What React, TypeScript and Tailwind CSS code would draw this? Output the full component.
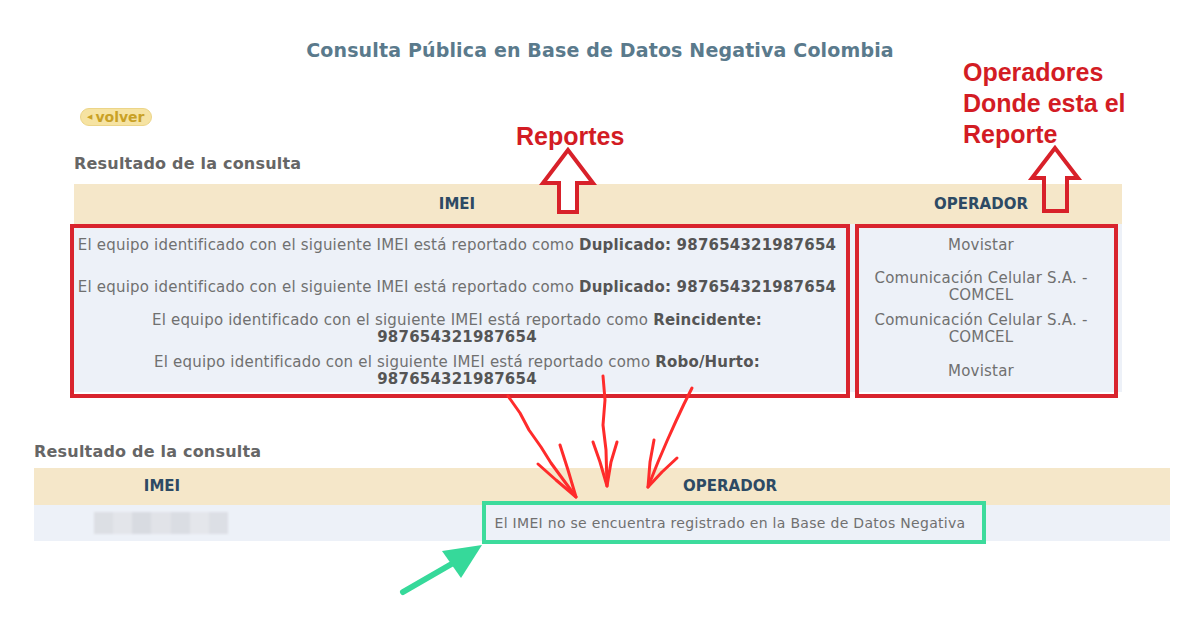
import React from 'react';

const reports = [
  { lines: [['El equipo identificado con el siguiente IMEI está reportado como ', 'Duplicado: 987654321987654']], operator: ['Movistar'] },
  { lines: [['El equipo identificado con el siguiente IMEI está reportado como ', 'Duplicado: 987654321987654']], operator: ['Comunicación Celular S.A. -', 'COMCEL'] },
  { lines: [['El equipo identificado con el siguiente IMEI está reportado como ', 'Reincidente:'], ['', '987654321987654']], operator: ['Comunicación Celular S.A. -', 'COMCEL'] },
  { lines: [['El equipo identificado con el siguiente IMEI está reportado como ', 'Robo/Hurto:'], ['', '987654321987654']], operator: ['Movistar'] },
];

const HeaderCell: React.FC<{ children: React.ReactNode }> = ({ children }) => (
  <div className="flex items-center justify-center text-[15px] font-bold text-[#2d4a64]">{children}</div>
);

// hand-drawn style overlays: callout arrows and highlight boxes
const Annotations: React.FC = () => (
  <svg className="absolute inset-0 pointer-events-none" width="1200" height="628" viewBox="0 0 1200 628">
    {/* outline up arrows */}
    <path d="M568 150 L543 183 L559 183 L559 212 L577 212 L577 183 L593 183 Z" fill="white" stroke="#d8212a" strokeWidth="4" strokeLinejoin="miter" />
    <path d="M1055 148 L1032 178 L1044 178 L1044 211 L1067 211 L1067 178 L1078 178 Z" fill="none" stroke="#d8212a" strokeWidth="4" strokeLinejoin="miter" />

    {/* highlight boxes */}
    <rect x="72" y="226" width="776" height="170" fill="none" stroke="#d9242e" strokeWidth="4" />
    <rect x="857" y="226" width="259" height="170" fill="none" stroke="#d9242e" strokeWidth="4" />
    <rect x="484" y="503" width="500" height="39" fill="none" stroke="#3ddb9c" strokeWidth="4" />

    {/* scribbled arrows */}
    <g fill="none" stroke="#ff2b2b" strokeWidth="3" strokeLinecap="round" strokeLinejoin="round">
      <path d="M508 396 L520 413 L529 430 L541 447 L551 463 L562 478 L576 497" />
      <path d="M538 464 L556 480 L576 497 M560 445 L568 470 L576 497" />
      <path d="M603 376 L605 400 L603 425 L606 450 L607 486" />
      <path d="M593 442 L600 462 L607 486 M617 442 L611 462 L607 486" />
      <path d="M692 388 L684 404 L676 421 L667 441 L658 462 L648 487" />
      <path d="M654 440 L650 462 L648 487 M677 458 L662 472 L648 487" />
    </g>

    {/* green pointer */}
    <line x1="403" y1="592" x2="455" y2="562" stroke="#36d99a" strokeWidth="6" strokeLinecap="round" />
    <path d="M482 545 L442 551 L461 578 Z" fill="#36d99a" />
  </svg>
);

export default function App() {
  return (
    <div className="relative w-[1200px] h-[628px] bg-white overflow-hidden font-['DejaVu_Sans',Verdana,sans-serif]">
      <h1 className="pt-[38px] text-center text-[19px] leading-[24px] tracking-[0.15px] font-bold text-[#5a7a8c]">
        Consulta Pública en Base de Datos Negativa Colombia
      </h1>

      {/* first result */}
      <section className="ml-[74px] w-[1048px]">
        <div className="mt-[46px] ml-[6px] flex h-[18px]">
          <span className="flex items-center h-[18px] pl-[6px] pr-[7px] rounded-full bg-[#f6e3a2] border border-[#ecd588] text-[14px] leading-none font-bold text-[#c9a126]">
            <span className="text-[7px] mr-[3px]">◀</span>volver
          </span>
        </div>
        <h2 className="mt-[28px] text-[16px] leading-[20px] tracking-[0.2px] font-bold text-[#666]">Resultado de la consulta</h2>
        <div className="mt-[10px] grid grid-cols-[766px_282px]">
          <div className="col-span-2 grid grid-cols-[766px_282px] h-[40px] bg-[#f5e7c9]">
            <HeaderCell>IMEI</HeaderCell>
            <HeaderCell>OPERADOR</HeaderCell>
          </div>
          {reports.map((r, i) => (
            <React.Fragment key={i}>
              <div className="h-[42px] flex flex-col items-center justify-center bg-[#edf1f8] text-[15px] leading-[17px] tracking-[0.2px] text-[#707070]">
                {r.lines.map(([plain, strong], j) => (
                  <div key={j}>
                    {plain}
                    <b className="text-[#555]">{strong}</b>
                  </div>
                ))}
              </div>
              <div className="h-[42px] flex flex-col items-center justify-center bg-[#edf1f8] text-[15px] leading-[17px] tracking-[0.2px] text-[#707070]">
                {r.operator.map((l) => (
                  <div key={l}>{l}</div>
                ))}
              </div>
            </React.Fragment>
          ))}
        </div>
      </section>

      {/* second result */}
      <section className="ml-[34px] w-[1136px]">
        <h2 className="mt-[50px] text-[16px] leading-[20px] tracking-[0.2px] font-bold text-[#666]">Resultado de la consulta</h2>
        <div className="mt-[6px] grid grid-cols-[256px_880px] h-[37px] bg-[#f5e7c9]">
          <HeaderCell>IMEI</HeaderCell>
          <HeaderCell>OPERADOR</HeaderCell>
        </div>
        <div className="grid grid-cols-[256px_880px] h-[36px] bg-[#edf1f8]">
          <div className="flex items-center pl-[60px]">
            <div className="flex h-[22px] w-[134px] blur-[1px]">
              <div className="flex-1 bg-[#dcdfe4]" />
              <div className="flex-1 bg-[#e3e5ea]" />
              <div className="flex-1 bg-[#d8dbe1]" />
              <div className="flex-1 bg-[#e1e3e8]" />
              <div className="flex-1 bg-[#dadde3]" />
              <div className="flex-1 bg-[#e4e6eb]" />
              <div className="flex-1 bg-[#dcdfe5]" />
            </div>
          </div>
          <div className="flex items-center justify-center text-[14px] tracking-[0.3px] text-[#707070]">
            El IMEI no se encuentra registrado en la Base de Datos Negativa
          </div>
        </div>
      </section>

      {/* red callout labels */}
      <div className="absolute left-[516px] top-[121px] font-['Liberation_Sans',Arial,sans-serif] text-[25px] leading-[31px] font-bold text-[#d31c24]">
        Reportes
      </div>
      <div className="absolute left-[963px] top-[57px] font-['Liberation_Sans',Arial,sans-serif] text-[25px] leading-[31px] font-bold text-[#d31c24]">
        <div>Operadores</div>
        <div>Donde esta el</div>
        <div>Reporte</div>
      </div>

      <Annotations />
    </div>
  );
}
